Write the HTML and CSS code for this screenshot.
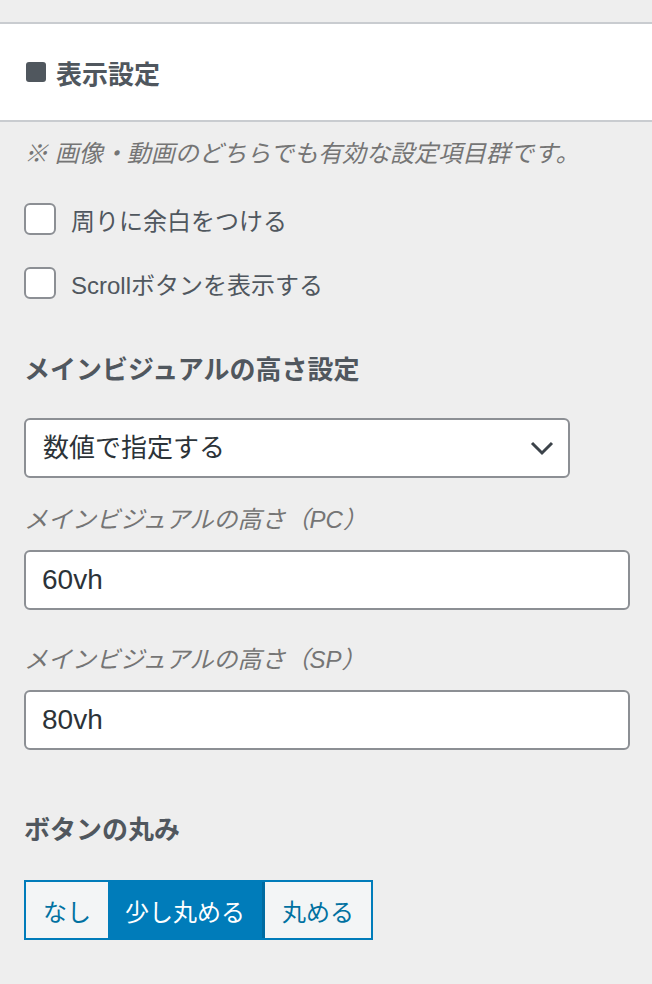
FILE: index.html
```html
<!DOCTYPE html>
<html lang="ja">

<head>
    <meta charset="UTF-8">
    <meta name="viewport" content="width=device-width, initial-scale=1.0">
    <title>表示設定</title>
    <link rel="stylesheet" href="styles.css">
</head>

<body>
    <div class="panel">
        <header class="panel-header">
            <span class="panel-icon"></span>
            <h2 class="panel-title">表示設定</h2>
        </header>

        <div class="panel-body">
            <p class="note">※ 画像・動画のどちらでも有効な設定項目群です。</p>

            <label class="check-row">
                <input type="checkbox" class="check-box">
                <span>周りに余白をつける</span>
            </label>
            <label class="check-row">
                <input type="checkbox" class="check-box">
                <span>Scrollボタンを表示する</span>
            </label>

            <h3 class="field-heading">メインビジュアルの高さ設定</h3>
            <div class="select-wrap">
                <select class="select-field">
                    <option>数値で指定する</option>
                </select>
                <svg class="select-arrow" width="24" height="16" viewBox="0 0 24 16">
                    <path d="M2 3 L12 13 L22 3" fill="none" stroke="#3c434a" stroke-width="3"/>
                </svg>
            </div>

            <label class="field-label" for="pc">メインビジュアルの高さ（PC）</label>
            <input type="text" id="pc" class="text-field" value="60vh">

            <label class="field-label field-label-sp" for="sp">メインビジュアルの高さ（SP）</label>
            <input type="text" id="sp" class="text-field" value="80vh">

            <h3 class="field-heading field-heading-btn">ボタンの丸み</h3>
            <div class="btn-group">
                <button class="btn-option">なし</button>
                <button class="btn-option is-active">少し丸める</button>
                <button class="btn-option">丸める</button>
            </div>
        </div>
    </div>
</body>

</html>
```

FILE: styles.css
```css
body {
    margin: 0;
    background-color: #eeeeee;
    font-family: "Liberation Sans", "Noto Sans CJK JP", sans-serif;
    color: #50575e;
}

.panel {
    padding-top: 22px;
}

.panel-header {
    display: flex;
    align-items: center;
    height: 96px;
    padding-left: 26px;
    background-color: #fff;
    border-top: 2px solid #c9ccd0;
    border-bottom: 2px solid #c9ccd0;
}

.panel-icon {
    width: 20px;
    height: 20px;
    border-radius: 3px;
    background-color: #50575e;
    margin-right: 10px;
}

.panel-title {
    margin: 0;
    font-size: 26px;
    font-weight: bold;
}

.panel-body {
    padding: 0 22px 0 24px;
}

.note {
    margin: 14px 0 0;
    font-size: 24px;
    line-height: 36px;
    font-style: italic;
    color: #757575;
}

.check-row {
    display: flex;
    align-items: center;
    gap: 15px;
    height: 32px;
    font-size: 24px;
    margin-top: 32px;
}

.note + .check-row {
    margin-top: 31px;
}

.check-box {
    appearance: none;
    margin: 0;
    width: 32px;
    height: 32px;
    border: 2px solid #8c8f94;
    border-radius: 6px;
    background-color: #fff;
}

.field-heading {
    margin: 53px 0 0;
    font-size: 26px;
    line-height: 36px;
    font-weight: bold;
}

.select-wrap {
    position: relative;
    width: 546px;
    margin-top: 30px;
}

.select-field {
    appearance: none;
    display: block;
    width: 100%;
    height: 60px;
    padding: 0 50px 0 17px;
    border: 2px solid #8c8f94;
    border-radius: 6px;
    background-color: #fff;
    font-family: inherit;
    font-size: 26px;
    color: #2c3338;
}

.select-arrow {
    position: absolute;
    right: 16px;
    top: 22px;
}

.field-label {
    display: block;
    margin-top: 24px;
    font-size: 24px;
    line-height: 36px;
    font-style: italic;
    color: #757575;
}

.field-label-sp {
    margin-top: 32px;
}

.text-field {
    display: block;
    box-sizing: border-box;
    width: 100%;
    height: 60px;
    margin-top: 12px;
    padding: 0 16px;
    border: 2px solid #8c8f94;
    border-radius: 6px;
    background-color: #fff;
    font-family: inherit;
    font-size: 28px;
    color: #2c3338;
}

.field-heading-btn {
    margin-top: 62px;
}

.btn-group {
    display: inline-flex;
    margin-top: 32px;
    border: 2px solid #007cba;
}

.btn-option {
    height: 56px;
    padding: 0 17px;
    border: none;
    background-color: #f3f5f6;
    font-family: inherit;
    font-size: 24px;
    color: #0071a1;
    cursor: pointer;
}

.btn-option.is-active {
    background-color: #007cba;
    color: #fff;
    border-right: 3px solid #006ba1;
}
```
